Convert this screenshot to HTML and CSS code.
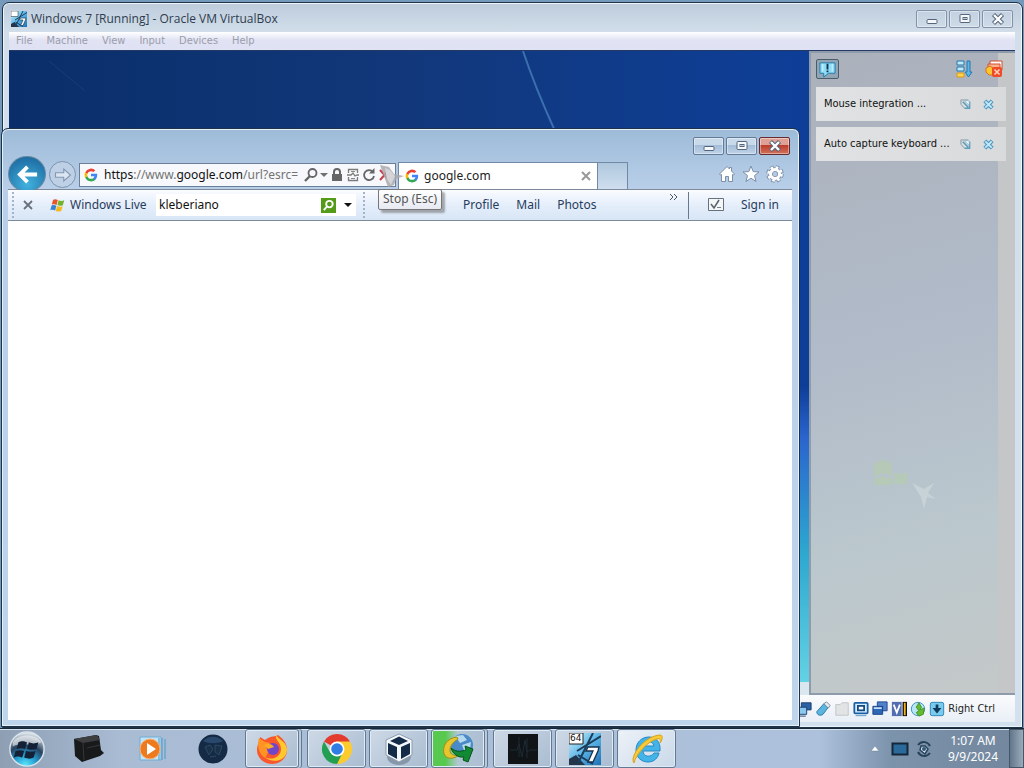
FILE: index.html
```html
<!DOCTYPE html>
<html lang="en">
<head>
<meta charset="utf-8">
<title>Windows 7 desktop</title>
<link rel="stylesheet" href="styles.css">
</head>
<body>
<svg class="defs" aria-hidden="true">
  <defs>
    <linearGradient id="skyTile" x1="0" y1="0" x2="1" y2="1"><stop offset="0" stop-color="#d6f2fc"/><stop offset=".5" stop-color="#5cb6e6"/><stop offset="1" stop-color="#1d6fb4"/></linearGradient>
    <symbol id="google" viewBox="0 0 24 24">
      <path fill="#4285f4" d="M22.6 12.2c0-.8-.1-1.500-.2-2.200H12v4.300h5.900a5 5 0 0 1-2.200 3.300v2.800h3.600c2.100-1.900 3.300-4.800 3.300-8.200z"/>
      <path fill="#34a853" d="M12 23c3 0 5.500-1 7.300-2.700l-3.600-2.800c-1 .7-2.200 1.100-3.700 1.100-2.900 0-5.300-1.900-6.200-4.500H2.200v2.800A11 11 0 0 0 12 23z"/>
      <path fill="#fbbc05" d="M5.800 14.100a6.600 6.600 0 0 1 0-4.200V7.100H2.200a11 11 0 0 0 0 9.800z"/>
      <path fill="#ea4335" d="M12 5.400c1.600 0 3.100.6 4.200 1.600l3.200-3.100A11 11 0 0 0 2.200 7.100l3.600 2.800C6.700 7.300 9.100 5.400 12 5.400z"/>
    </symbol>
    <symbol id="flag" viewBox="0 0 18 16">
      <path fill="#e8572a" d="M3.500 1.500C5.500.4 7 .8 8.800 1.700L7.400 7.300C5.600 6.300 4 6.200 2 7z"/>
      <path fill="#74b12c" d="M9.700 2.100c2 1 3.800 1.200 6.300.1l-1.500 5.400c-2.300.9-4.100.8-6.200-.1z"/>
      <path fill="#3a83cf" d="M1.800 8c2-.9 3.600-.7 5.400.3L5.800 13.700C4 12.700 2.300 12.500.3 13.400z"/>
      <path fill="#f4b91d" d="M8 8.700c2.100 1 3.900 1.100 6.200.2l-1.500 5.400c-2.300.9-4.100.7-6.200-.2z"/>
    </symbol>
    <symbol id="minimize" viewBox="0 0 16 14"><rect x="3" y="7.500" width="10" height="4" rx="1" fill="#f4f8fc" stroke="#56657a"/></symbol>
    <symbol id="maximize" viewBox="0 0 16 14"><rect x="3" y="2.500" width="10" height="8" rx="1" fill="#f4f8fc" stroke="#56657a"/><rect x="6" y="5.500" width="4" height="2" fill="#b6c8dc" stroke="#56657a"/></symbol>
    <symbol id="close" viewBox="0 0 16 14"><path d="M3.500 2.500L12.500 11.500M12.500 2.500L3.500 11.500" stroke="#56657a" stroke-width="4.400"/><path d="M4 3L12 11M12 3L4 11" stroke="#fff" stroke-width="2.400"/></symbol>
    <symbol id="win7tile" viewBox="0 0 32 32">
      <rect width="32" height="32" fill="url(#skyTile)"/><path d="M0 32V26L7 22L16 32z" fill="#24364b"/>
      <path d="M24 0L9 30M8 18L32 3M9 22L24 31" stroke="#1c3d5a" stroke-width="2"/><path d="M19 14h11l-1 4-5 11h-5l5-11h-7z" fill="#fff" stroke="#16324f" stroke-width="1.300"/>
      <path d="M0 0h14v11H0z" fill="#fff" stroke="#222"/>
    </symbol>
    <symbol id="pin" viewBox="0 0 12 12"><path d="M1 1h8M1 1v5l4 4" fill="none" stroke="#8798a6"/><path d="M3 3l6 6M10.500 3v7H5" fill="none" stroke="#5b9cba" stroke-width="1.600"/><path d="M5 2h5v5z" fill="#fff" stroke="#6ba5c1" stroke-width=".7"/></symbol>
    <symbol id="dismiss" viewBox="0 0 12 12"><path d="M2 2l8 8M10 2l-8 8" stroke="#4b96c2" stroke-width="4.400"/><path d="M2.500 2.500l7 7M9.500 2.500l-7 7" stroke="#c4e9f9" stroke-width="2"/></symbol>
  </defs>
</svg>

<div class="desktop">
  <main class="workspace">
    <section class="window vm" aria-label="VirtualBox">
      <header class="vm-title">
        <svg class="i16"><use href="#win7tile"/></svg>
        <h1 class="caption">Windows 7 [Running] - Oracle VM VirtualBox</h1>
        <div class="controls">
          <button class="control" aria-label="Minimize"><svg><use href="#minimize"/></svg></button>
          <button class="control" aria-label="Maximize"><svg><use href="#maximize"/></svg></button>
          <button class="control" aria-label="Close"><svg><use href="#close"/></svg></button>
        </div>
      </header>
      <nav class="menu">
        <button>File</button><button>Machine</button><button>View</button><button>Input</button><button>Devices</button><button>Help</button>
      </nav>
      <div class="guest">
        <div class="wallpaper">
          <svg class="streak" viewBox="0 0 800 80" preserveAspectRatio="none"><path d="M514 0Q526 36 546 80" fill="none" stroke="#3a70ae" stroke-width="2"/><path d="M40 10L76 40" stroke="#153f79" fill="none"/></svg>
        </div>
        <aside class="notices">
          <div class="notice-bar">
            <button class="notice-toggle" aria-label="Notifications"><svg viewBox="0 0 20 18"><path d="M2 2h16v11h-7l-5 4v-4H2z" fill="#8fdcf6" stroke="#2379a9"/><path d="M10 3v6M10 10v2" stroke="#0d3550" stroke-width="2"/><path d="M5 3v8M15 3v8" stroke="#d8f5fd"/></svg></button>
            <span class="notice-tools">
              <button aria-label="Sort"><svg class="i18" viewBox="0 0 18 18"><path d="M2 1h7v4H2zM2 7h7v4H2z" fill="#bdebfa" stroke="#2477ae"/><path d="M2 13h7v4H2z" fill="#ffd34c" stroke="#d69a1c"/><path d="M12 1h3v11h2l-3.500 5L10 12h2z" fill="#58b7e6" stroke="#2477ae"/></svg></button>
              <button aria-label="Remove all"><svg class="i18" viewBox="0 0 18 18"><path d="M5 1h12v9H5z" fill="#fff" stroke="#d44c28"/><path d="M3 4h12v9H3z" fill="#f9b28f" stroke="#d44c28"/><path d="M1 8l4-2 3 2v7H4l-3-3z" fill="#ffc72f" stroke="#e26c19"/><rect x="7" y="7" width="10" height="10" rx="2" fill="#ef4b24"/><path d="M9.500 9.500l5 5M14.500 9.500l-5 5" stroke="#ffd0bd" stroke-width="1.600"/></svg></button>
            </span>
          </div>
          <article class="notice"><span>Mouse integration ...</span><button aria-label="Pin"><svg><use href="#pin"/></svg></button><button aria-label="Dismiss"><svg><use href="#dismiss"/></svg></button></article>
          <article class="notice"><span>Auto capture keyboard ...</span><button aria-label="Pin"><svg><use href="#pin"/></svg></button><button aria-label="Dismiss"><svg><use href="#dismiss"/></svg></button></article>
          <svg class="ghost" viewBox="0 0 80 60"><path d="M8 8c7-6 13-4 18 0v12c-6-4-12-3-18 1zM8 23c7-3 13-3 18 0v6H8zM28 16c6 3 8 3 13 0v12H28z" fill="#b5d39b"/><path d="M46 27l12 6 10-6-6 10 8 6-9-2-3 12-3-12z" fill="#dce8e5"/></svg>
        </aside>
      </div>
      <footer class="vm-status">
        <svg viewBox="0 0 18 18"><path d="M6 2h11v8H6z" fill="#2c63a6" stroke="#173763"/><path d="M1 7h11v8H1z" fill="#8cc8ee" stroke="#173763"/><path d="M4 17h7" stroke="#173763"/></svg>
        <svg viewBox="0 0 18 18"><path d="M2 12l8-9 5 4-6 8c-3 2-7 1-7-3z" fill="#5bb5df" stroke="#24729f"/><path d="M10 3l3-2 4 4-2 3z" fill="#e5edf3" stroke="#708292"/></svg>
        <svg viewBox="0 0 18 18"><path d="M2 4h5l2-2h7v14H2z" fill="#e2e3e4" stroke="#bfc2c6"/></svg>
        <svg viewBox="0 0 18 18"><rect x="1.500" y="2" width="15" height="12" rx="1" fill="#d1efff" stroke="#1e5fa4" stroke-width="2"/><rect x="5.500" y="5.500" width="7" height="5" fill="#fff" stroke="#174984" stroke-width="2"/><path d="M3 16.500h12" stroke="#4b94c4"/></svg>
        <svg viewBox="0 0 18 18"><path d="M6 1h11v10H6z" fill="#4f82ca" stroke="#1d438b"/><path d="M1 6h11v9H1z" fill="#2d67b8" stroke="#173d80"/><path d="M2 7h9v2H2z" fill="#c3def7"/></svg>
        <svg viewBox="0 0 18 18"><rect x="1" y="1" width="11" height="16" fill="#526db0"/><path d="M3 4l3.500 9L10 4" fill="none" stroke="#fff" stroke-width="2"/><path d="M13 1h5v16h-5z" fill="#111"/><path d="M14.500 2h2v14h-2z" fill="#f4b51b"/></svg>
        <svg viewBox="0 0 18 18"><circle cx="9" cy="9" r="7.500" fill="#b9e7f6" stroke="#2e8abd"/><path d="M10 2l3 5-2 3 5-2-1 7-5 2-3-4 3-2-3-4z" fill="#64bb2f" stroke="#3f8f25"/></svg>
        <svg viewBox="0 0 18 18"><rect x="1.500" y="1.500" width="15" height="15" rx="2" fill="#78cbed" stroke="#277eb2"/><path d="M7.500 4h3v4H14l-5 6-5-6h3.500z" fill="#10395e"/></svg>
        <span>Right Ctrl</span>
      </footer>
    </section>

    <section class="window browser" aria-label="Internet Explorer">
      <header class="browser-title">
        <div class="controls">
          <button class="control" aria-label="Minimize"><svg><use href="#minimize"/></svg></button>
          <button class="control" aria-label="Maximize"><svg><use href="#maximize"/></svg></button>
          <button class="control danger" aria-label="Close"><svg><use href="#close"/></svg></button>
        </div>
      </header>
      <div class="nav-row">
        <button class="back" aria-label="Back"><svg viewBox="0 0 24 24"><path d="M22 12H5M12 4l-8 8 8 8" fill="none" stroke="#fff" stroke-width="4"/></svg></button>
        <button class="forward" aria-label="Forward"><svg viewBox="0 0 24 24"><path d="M2 9h11V4l9 8-9 8v-5H2z" fill="#dbe6f2" stroke="#8598b2" stroke-width="1.500"/></svg></button>
        <div class="address">
          <svg class="i14"><use href="#google"/></svg>
          <a class="url" href="#"><span class="dark">https</span>://www.<span class="dark">google.com</span>/url?esrc=</a>
          <button aria-label="Search"><svg class="i14" viewBox="0 0 14 14"><circle cx="8.500" cy="5" r="4" fill="none" stroke="#666" stroke-width="1.800"/><path d="M6 8l-5 5" stroke="#666" stroke-width="2.400"/></svg></button>
          <button aria-label="History"><svg class="i8" viewBox="0 0 8 8"><path d="M0 2h8L4 6z" fill="#707070"/></svg></button>
          <svg class="i14" viewBox="0 0 14 14"><path d="M4 7V4a3 3 0 0 1 6 0v3" fill="none" stroke="#666" stroke-width="2"/><path d="M2 6h10v7H2z" fill="#666"/></svg>
          <button aria-label="Compatibility view"><svg class="i14" viewBox="0 0 14 14"><path d="M2.500 5V1.500h9V5M2.500 9v3.500h9V9M1 7h4l2-2 2 3 2-1h2" fill="none" stroke="#7b7b7b" stroke-width="1.300"/><path d="M5 3.500h4M5 10.500h4" stroke="#888"/></svg></button>
          <button aria-label="Refresh"><svg class="i14" viewBox="0 0 14 14"><path d="M11 4a5 5 0 1 0 1 4" fill="none" stroke="#666" stroke-width="1.800"/><path d="M12.500 0v5.500H7z" fill="#666"/></svg></button>
          <button aria-label="Stop"><svg class="i14" viewBox="0 0 14 14"><path d="M2 2l9 10M11 2L2 12" stroke="#c83d48" stroke-width="2"/></svg></button>
        </div>
        <div class="tab"><svg class="i14"><use href="#google"/></svg><span>google.com</span><button aria-label="Close tab"><svg class="i10" viewBox="0 0 10 10"><path d="M1 1l8 8M9 1L1 9" stroke="#999" stroke-width="2"/></svg></button></div>
        <button class="new-tab" aria-label="New tab"></button>
        <div class="tools">
          <button aria-label="Home"><svg class="i18" viewBox="0 0 18 18"><path d="M1.500 9L9 1.500 11.500 4V2.500h2V6l3 3-1 1-1-.5v7h-4v-5h-3v5h-4v-7l-1 .5z" fill="#fff" stroke="#7c8fa8"/></svg></button>
          <button aria-label="Favorites"><svg class="i18" viewBox="0 0 18 18"><path d="M9 1l2.200 5.600 5.800.3-4.500 3.700 1.500 5.900L9 13.200l-5 3.300 1.500-5.900L1 6.900l5.800-.3z" fill="#fff" stroke="#7c8fa8"/></svg></button>
          <button aria-label="Settings"><svg class="i18" viewBox="0 0 18 18"><circle cx="9" cy="9" r="6.500" fill="none" stroke="#7c8fa8" stroke-width="4.500" stroke-dasharray="3.100 2"/><circle cx="9" cy="9" r="4.500" fill="none" stroke="#7c8fa8" stroke-width="4.600"/><circle cx="9" cy="9" r="6.500" fill="none" stroke="#fff" stroke-width="2.600" stroke-dasharray="2.500 2.600"/><circle cx="9" cy="9" r="4.500" fill="none" stroke="#fff" stroke-width="3"/></svg></button>
        </div>
      </div>
      <div class="live-bar">
        <span class="grip"></span>
        <button class="bar-close" aria-label="Close toolbar"><svg class="i10" viewBox="0 0 10 10"><path d="M1 1l8 8M9 1L1 9" stroke="#68707c" stroke-width="1.800"/></svg></button>
        <a class="brand" href="#"><svg><use href="#flag"/></svg>Windows Live</a>
        <div class="search">
          <input type="text" value="kleberiano" aria-label="Search">
          <button class="go" aria-label="Go"><svg viewBox="0 0 16 16"><circle cx="9" cy="6.500" r="3.500" fill="none" stroke="#fff" stroke-width="2"/><path d="M6.500 9L3 13" stroke="#fff" stroke-width="2"/></svg></button>
          <button aria-label="Options"><svg class="i8" viewBox="0 0 8 8"><path d="M0 2h8L4 6z" fill="#111"/></svg></button>
        </div>
        <span class="grip"></span>
        <nav class="live-links"><a href="#">Profile</a><a href="#">Mail</a><a href="#">Photos</a></nav>
        <button class="more" aria-label="More"><svg class="i8" viewBox="0 0 8 8"><path d="M0 1l3 3-3 3M4 1l3 3-3 3" fill="none" stroke="#4a5565"/></svg></button>
        <div class="account"><button aria-label="Customize"><svg class="i18" viewBox="0 0 18 18"><path d="M1.500 2.500h15v12h-15z" fill="#f4f6f8" stroke="#66717e"/><path d="M4 8l3 4 5-8" fill="none" stroke="#56616d" stroke-width="1.500"/><path d="M10 11.500h4" stroke="#78828e"/></svg></button><a href="#">Sign in</a></div>
      </div>
      <div class="page"></div>
      <div class="tooltip" role="tooltip">Stop (Esc)</div>
      <svg class="pointer" viewBox="0 0 24 24"><path d="M0 0l9 2 5 7 10 2-8 3-2 6-6 2-3-8z" fill="#a9a9ad" fill-opacity=".85"/><path d="M5 3l5 2 5 6-4 9-4-6z" fill="#d4d4d8"/></svg>
    </section>
  </main>

  <footer class="taskbar">
    <button class="start" aria-label="Start"><svg viewBox="0 0 40 40">
      <defs><radialGradient id="orb" cx=".45" cy="1" r=".95"><stop offset="0" stop-color="#5cecff"/><stop offset=".35" stop-color="#249bd0"/><stop offset=".65" stop-color="#28425f"/><stop offset="1" stop-color="#d8dfe6"/></radialGradient></defs>
      <circle cx="20" cy="20" r="18" fill="url(#orb)" stroke="#d9e4ec" stroke-width="1.500"/><path d="M5 13C10 4 29 3 35 13c-8 5-20 0-30 4z" fill="#fff" fill-opacity=".55"/>
      <path d="M11 13c4-2 6-1 9 0l-2 7c-3-1-6-1-9 0zM22 13c4 2 7 1 10 0l-2 7c-4 1-7 1-10 0zM8 22c4-1 6-1 9 0l-2 7c-3-1-5-2-9 0zM19 22c4 1 7 1 10 0l-2 7c-4 2-6 1-10 0z" fill="#142035"/></svg></button>
    <div class="pinned">
      <button aria-label="Device"><svg viewBox="0 0 32 32"><path d="M1 6L23 2l3 1 2 14 3 3-4 3-18 6-7-6z" fill="#17191b"/><path d="M1 6l9 4 17-3-3-5z" fill="#3c3e40"/><path d="M10 10l1 17M14 15l13-3" stroke="#343638"/></svg></button>
      <button aria-label="Media player"><svg viewBox="0 0 32 32"><path d="M5 4h21v23H5z" fill="#c2e4f7" stroke="#6facd4"/><path d="M24 5v22M27 5v22M30 6v20" stroke="#4e9bc6"/><circle cx="15" cy="16" r="10" fill="#ee7a1f" stroke="#f7b276"/><path d="M12 10l9 6-9 6z" fill="#fff"/></svg></button>
      <button aria-label="Globe"><svg viewBox="0 0 32 32"><circle cx="16" cy="16" r="14.500" fill="#142a45"/><path d="M6 8c5-5 14-6 20 0-5 3-15 3-20 0z" fill="#29486c"/><path d="M8 14l5-2 3 4-4 6zM18 12l7 1-3 9-4-3zM13 24l6-1" fill="#1b3148" stroke="#2d4a63"/></svg></button>
    </div>
    <div class="running">
      <button class="task stack" aria-label="Firefox"><svg viewBox="0 0 32 32"><path d="M1 17C1 11 4 9 4 4l5 3C15 2 20 4 22 2c7 5 9 10 9 15a15 14 0 0 1-30 0z" fill="#f9572d"/><path d="M20 2c-1 6 5 7 5 14 0 8-9 12-16 8 5 6 21 6 22-7C31 9 24 8 20 2z" fill="#ffc82f"/><path d="M3 5l6 4 5 1-4 5 3 3-4 7C2 20 1 12 3 5z" fill="#ff9324"/><circle cx="17" cy="16" r="6" fill="#7146c8"/><path d="M8 12c5-2 8-1 10 2l-6 2z" fill="#ffac25"/></svg></button>
      <button class="task" aria-label="Chrome"><svg viewBox="0 0 32 32"><path d="M16 16L3 8.500A15 15 0 0 1 29 8.500z" fill="#e33b2e"/><path d="M16 31L16 8.500h13A15 15 0 0 1 16 31z" fill="#fccb2d"/><path d="M3 8.500L9.500 20l11.500 1-5 10A15 15 0 0 1 3 8.500z" fill="#229f50"/><circle cx="16" cy="16" r="7.500" fill="#fff"/><circle cx="16" cy="16" r="5.800" fill="#2f7ee6"/></svg></button>
      <button class="task" aria-label="VirtualBox"><svg viewBox="0 0 32 32"><path d="M4 23c0 12 24 12 24 0l-12 5z" fill="#8797aa"/><path d="M16 1l13 6v15l-13 7-13-7V7z" fill="#f4f8fc" stroke="#8c9cae"/><path d="M16 3.500L25 8l-9 4-9-4zM5 10l9 4v12l-9-5zM27 10l-9 4v12l9-5z" fill="#142b47"/></svg></button>
      <button class="task stack progress" aria-label="Download manager"><svg viewBox="0 0 32 32"><circle cx="20" cy="12" r="11" fill="#4b8ac8"/><path d="M13 3l8-1 4 5-7 3zM20 12l9-3-1 8-5 3z" fill="#b5d9ee"/><path d="M15 4C5 5 0 13 2 21c3 6 10 5 15 1-5 1-9 0-9-5 0-4 3-8 8-11z" fill="#e9c52d" stroke="#9c901d"/><path d="M9 15c6 5 11 3 15 2l-1-4 8 3-5 13-5-2 1-3c-6 1-11-3-13-9z" fill="#128a33" stroke="#07541b"/></svg></button>
      <button class="task" aria-label="Monitor"><svg viewBox="0 0 32 32"><path d="M1 1h30v30H1z" fill="#101416"/><path d="M3 17h7l2-6 3 13 3-17 2 12 3-2h7M12 4v20M20 5v20" fill="none" stroke="#1c2b35"/></svg></button>
      <button class="task" aria-label="Windows 7 VM"><svg><use href="#win7tile"/></svg><span class="bits">64</span></button>
      <button class="task active" aria-label="Internet Explorer"><svg viewBox="0 0 32 32"><path d="M28 20h-5c-3 5-11 4-11-2h17C30 8 24 4 18 4 10 4 5 10 5 17s5 12 12 12c6 0 10-4 11-9zM12 13c1-6 10-6 11 0z" fill="#43b4e8" stroke="#2688c5"/><path d="M3 30C-2 24 13 3 29 2c3 0 3 4 0 8 1-4 0-5-3-4C17 8 5 21 3 30z" fill="#f6cb35" stroke="#d8a21c"/></svg></button>
    </div>
    <div class="tray">
      <button class="expand" aria-label="Show hidden icons"><svg class="i8" viewBox="0 0 8 8"><path d="M0 6h8L4 1z" fill="#fff" stroke="#6c8096" stroke-width=".5"/></svg></button>
      <svg class="i18" viewBox="0 0 18 18"><rect x="1.500" y="3.500" width="15" height="11" fill="#2a6a9a" stroke="#152638" stroke-width="2"/></svg>
      <svg class="i18" viewBox="0 0 18 18"><path d="M3 5c4-5 10-3 12 1M15 13c-4 5-10 3-12-1" fill="none" stroke="#27435c" stroke-width="2"/><path d="M6 6h4l3 3-3 5-5-4z" fill="#d9e5ee" stroke="#27435c" stroke-width="1.500"/><circle cx="9" cy="9" r="2" fill="#315a78"/></svg>
      <time class="clock"><span>1:07 AM</span><span>9/9/2024</span></time>
      <button class="peek" aria-label="Show desktop"></button>
    </div>
  </footer>
</div>
</body>
</html>
```

FILE: styles.css
```css
* { box-sizing: border-box; }
body { margin: 0; font: 12px/16px "Noto Sans", "Open Sans", sans-serif; color: #1e2a3a; }
button { font: inherit; color: inherit; border: 0; background: none; padding: 0; display: flex; align-items: center; justify-content: center; flex-shrink: 0; }
a { color: inherit; text-decoration: none; }
svg { display: block; flex-shrink: 0; }
.defs { position: absolute; width: 0; height: 0; }
.i8 { width: 8px; height: 8px; }
.i10 { width: 10px; height: 10px; }
.i14 { width: 14px; height: 14px; }
.i16 { width: 16px; height: 16px; }
.i18 { width: 18px; height: 18px; }

.desktop { min-height: 100vh; display: flex; flex-direction: column; background: #7599ba; }
.workspace { flex: 1; position: relative; overflow: hidden; }
.window { position: absolute; display: flex; flex-direction: column; border: 1px solid #1e3248; border-radius: 7px 7px 0 0; }
.controls { display: flex; gap: 2px; margin-left: auto; }
.control { width: 31px; height: 18px; border: 1px solid #8292a8; border-radius: 2px; box-shadow: inset 0 0 0 1px #ffffff66; }
.control svg { width: 16px; height: 14px; }

.vm { inset: 2px 1px 0 2px; padding: 0 7px 5px 6px; background: linear-gradient(#bdcbdc, #d2dfea 30px, #d3e1ef); box-shadow: inset 0 0 0 1px #eef5fb; }
.vm-title { display: flex; align-items: center; gap: 4px; height: 29px; padding: 3px 2px 0; }
.caption { margin: 0; font-weight: 400; font-family: "Open Sans", sans-serif; font-size: 12px; color: #2e3c4e; }
.menu { display: flex; gap: 14px; height: 18px; padding: 0 7px; background: linear-gradient(#fff, #e1e3f4 8px, #dfe2f4); color: #9b9dab; font: 11px/16px "DejaVu Sans Condensed", sans-serif; }
.guest { flex: 1; display: flex; min-height: 0; border-top: 1px solid #243a64; }
.wallpaper { flex: 1; background: linear-gradient(#0000 0 98%, #dae7ee 98%), linear-gradient(#0000 52%, #2a65cd 60%, #2da8d0 78%, #69d6e6), linear-gradient(90deg, #092e69, #12387b 50%, #0d3e98); }
.streak { width: 100%; height: 80px; }
.notices { width: 206px; display: flex; flex-direction: column; gap: 6px; border: 2px solid #8e9bab; border-right: 0; padding: 0 9px 0 5px; background: linear-gradient(90deg, #0000 187px, #c5c6c8 187px), linear-gradient(165deg, #abb1bb, #b1bbc9 45%, #bbc8cd 75%, #c4c8c8); }
.notice-bar { display: flex; align-items: center; justify-content: space-between; height: 28px; padding-top: 4px; }
.notice-toggle { width: 23px; height: 20px; border: 1px solid #4b5d6d; border-radius: 2px; background: #91a5b5; }
.notice-toggle svg { width: 19px; height: 17px; }
.notice-tools { display: flex; gap: 12px; padding-right: 3px; }
.notice { display: flex; align-items: center; gap: 12px; height: 34px; padding: 0 12px 0 8px; background: linear-gradient(90deg, #e0e2e3, #d8dadb); color: #111; font: 11px/16px "DejaVu Sans Condensed", sans-serif; white-space: nowrap; }
.notice span { flex: 1; width: 0; }
.notice svg { width: 11px; height: 11px; }
.ghost { width: 80px; height: 60px; margin: 289px 0 0 50px; opacity: .4; }
.vm-status { display: flex; align-items: center; justify-content: flex-end; gap: 3px; height: 27px; padding: 0 20px 0 0; background: linear-gradient(#fafbfc, #e9eff7); color: #222; font: 11px/16px "DejaVu Sans Condensed", sans-serif; }
.vm-status svg { width: 16px; height: 16px; }

.browser { inset: 128px 224px 1px 1px; padding: 0 7px 6px 6px; background: linear-gradient(#9dbbd8, #b9cfe9 60px, #bfd5ec); box-shadow: inset 0 0 0 1px #e4f0fa; }
.browser-title { display: flex; height: 29px; padding: 8px 2px 0; }
.browser .control { background: linear-gradient(#c8d9ea 45%, #a4bdd8 46%, #bfd3e8); border-color: #647b98; }
.browser .danger { background: linear-gradient(#dfa196 45%, #bd3c2c 46%, #d0735b); border-color: #652b32; }
.nav-row { display: flex; align-items: flex-end; height: 32px; border-bottom: 1px solid #7c8a9b; }
.back { width: 38px; height: 36px; border-radius: 50%; background: radial-gradient(circle at 50% 80%, #42b2df, #257bb0 65%, #1a5f94); border: 1px solid #64869f; margin: 0 3px -3px 0; }
.back svg { width: 23px; height: 23px; }
.forward { width: 27px; height: 27px; border: 1px solid #7e93ae; border-radius: 50%; background: #bdd0e5; margin: 0 3px 1px 0; }
.forward svg { width: 18px; height: 18px; }
.address { flex: 0 1 317px; min-width: 0; display: flex; align-items: center; gap: 2px; height: 24px; padding: 0 3px 0 4px; margin: 0 2px 2px 0; background: #f7f8fb; border: 1px solid #6c7f98; }
.url { flex: 1; min-width: 0; white-space: nowrap; padding-left: 4px; color: #737373; }
.dark { color: #111; }
.tab { flex: 0 1 200px; min-width: 0; display: flex; align-items: center; gap: 5px; height: 27px; padding: 0 6px; background: #fff; border: 1px solid #7189a6; border-bottom: 0; color: #222; }
.tab span { flex: 1; }
.new-tab { width: 30px; height: 27px; border: 1px solid #7189a6; border-width: 1px 1px 0 0; background: linear-gradient(#afc8dd, #cfdeef); }
.tools { display: flex; gap: 6px; margin: 0 8px 6px auto; }
.live-bar { display: flex; align-items: center; height: 31px; border-bottom: 1px solid #7c8a9b; background: linear-gradient(#fafcff, #e5eefb 50%, #d8e6f6); color: #283c5c; white-space: nowrap; }
.grip { width: 3px; height: 26px; margin: 0 6px 0 4px; border-left: 2px dotted #a5b3c8; }
.bar-close { width: 14px; height: 20px; margin-right: 15px; }
.brand { display: flex; align-items: center; gap: 4px; width: 106px; }
.brand svg { width: 16px; height: 15px; }
.search { flex: 0 1 200px; min-width: 0; display: flex; align-items: center; gap: 8px; height: 22px; padding: 0 4px 0 3px; margin-right: 3px; background: #fff; }
.search input { flex: 1; width: 0; border: 0; padding: 0; outline: 0; font: inherit; color: #111; background: none; }
.go { width: 15px; height: 15px; background: #549b18; }
.go svg { width: 15px; height: 15px; }
.live-links { display: flex; gap: 17px; margin-left: 91px; }
.more { align-self: flex-start; margin: 3px 10px 0 auto; }
.account { display: flex; align-items: center; gap: 16px; height: 27px; padding: 0 13px 0 18px; border-left: 1px solid #68788c; }
.page { flex: 1; background: #fff; }
.tooltip { position: absolute; left: 376px; top: 60px; padding: 0 4px 1px; border: 1px solid #777; border-radius: 2px; background: linear-gradient(#fff, #e7e9f2); box-shadow: 3px 3px 2px #6668; color: #555; line-height: 18px; }
.pointer { position: absolute; left: 378px; top: 36px; width: 24px; height: 24px; }

.taskbar { display: flex; align-items: center; height: 40px; border-top: 1px solid #172838; box-shadow: inset 0 1px #d6e2ee; background: linear-gradient(90deg, #8e9fb4, #a9bcd4 12%, #adc1dc 80%, #7c93ac 87%, #72869c); }
.start { width: 40px; height: 39px; margin-left: 7px; }
.start svg { width: 38px; height: 38px; }
.pinned { display: flex; gap: 30px; margin: 0 16px 0 26px; }
.pinned svg { width: 32px; height: 32px; }
.running { display: flex; gap: 3px; }
.task { position: relative; width: 59px; height: 39px; border: 1px solid #637993; border-radius: 3px; background: linear-gradient(135deg, #ced9e6, #a9bcd1); box-shadow: inset 0 0 0 1px #e1ebf4; }
.task svg { width: 32px; height: 32px; }
.stack { width: 54px; margin-right: 5px; box-shadow: inset 0 0 0 1px #e1ebf4, 2px 0 #b9cadb, 3px 0 #637993; }
.progress { background: linear-gradient(90deg, #58c94f 26%, #b2c7d4 50%, #adbed3); }
.task.active { background: linear-gradient(135deg, #edf2f8, #c9d8e8); }
.bits { position: absolute; left: 14px; top: 3px; color: #111; font: 9px/11px "DejaVu Sans", sans-serif; }
.tray { display: flex; align-items: center; gap: 6px; margin-left: auto; height: 100%; color: #fff; }
.expand { margin-right: 6px; }
.clock { display: flex; flex-direction: column; align-items: center; width: 64px; padding-left: 4px; line-height: 16px; }
.peek { width: 15px; height: 39px; border: 1px solid #46576a; background: linear-gradient(90deg, #62768b, #9aabbb); }
```
